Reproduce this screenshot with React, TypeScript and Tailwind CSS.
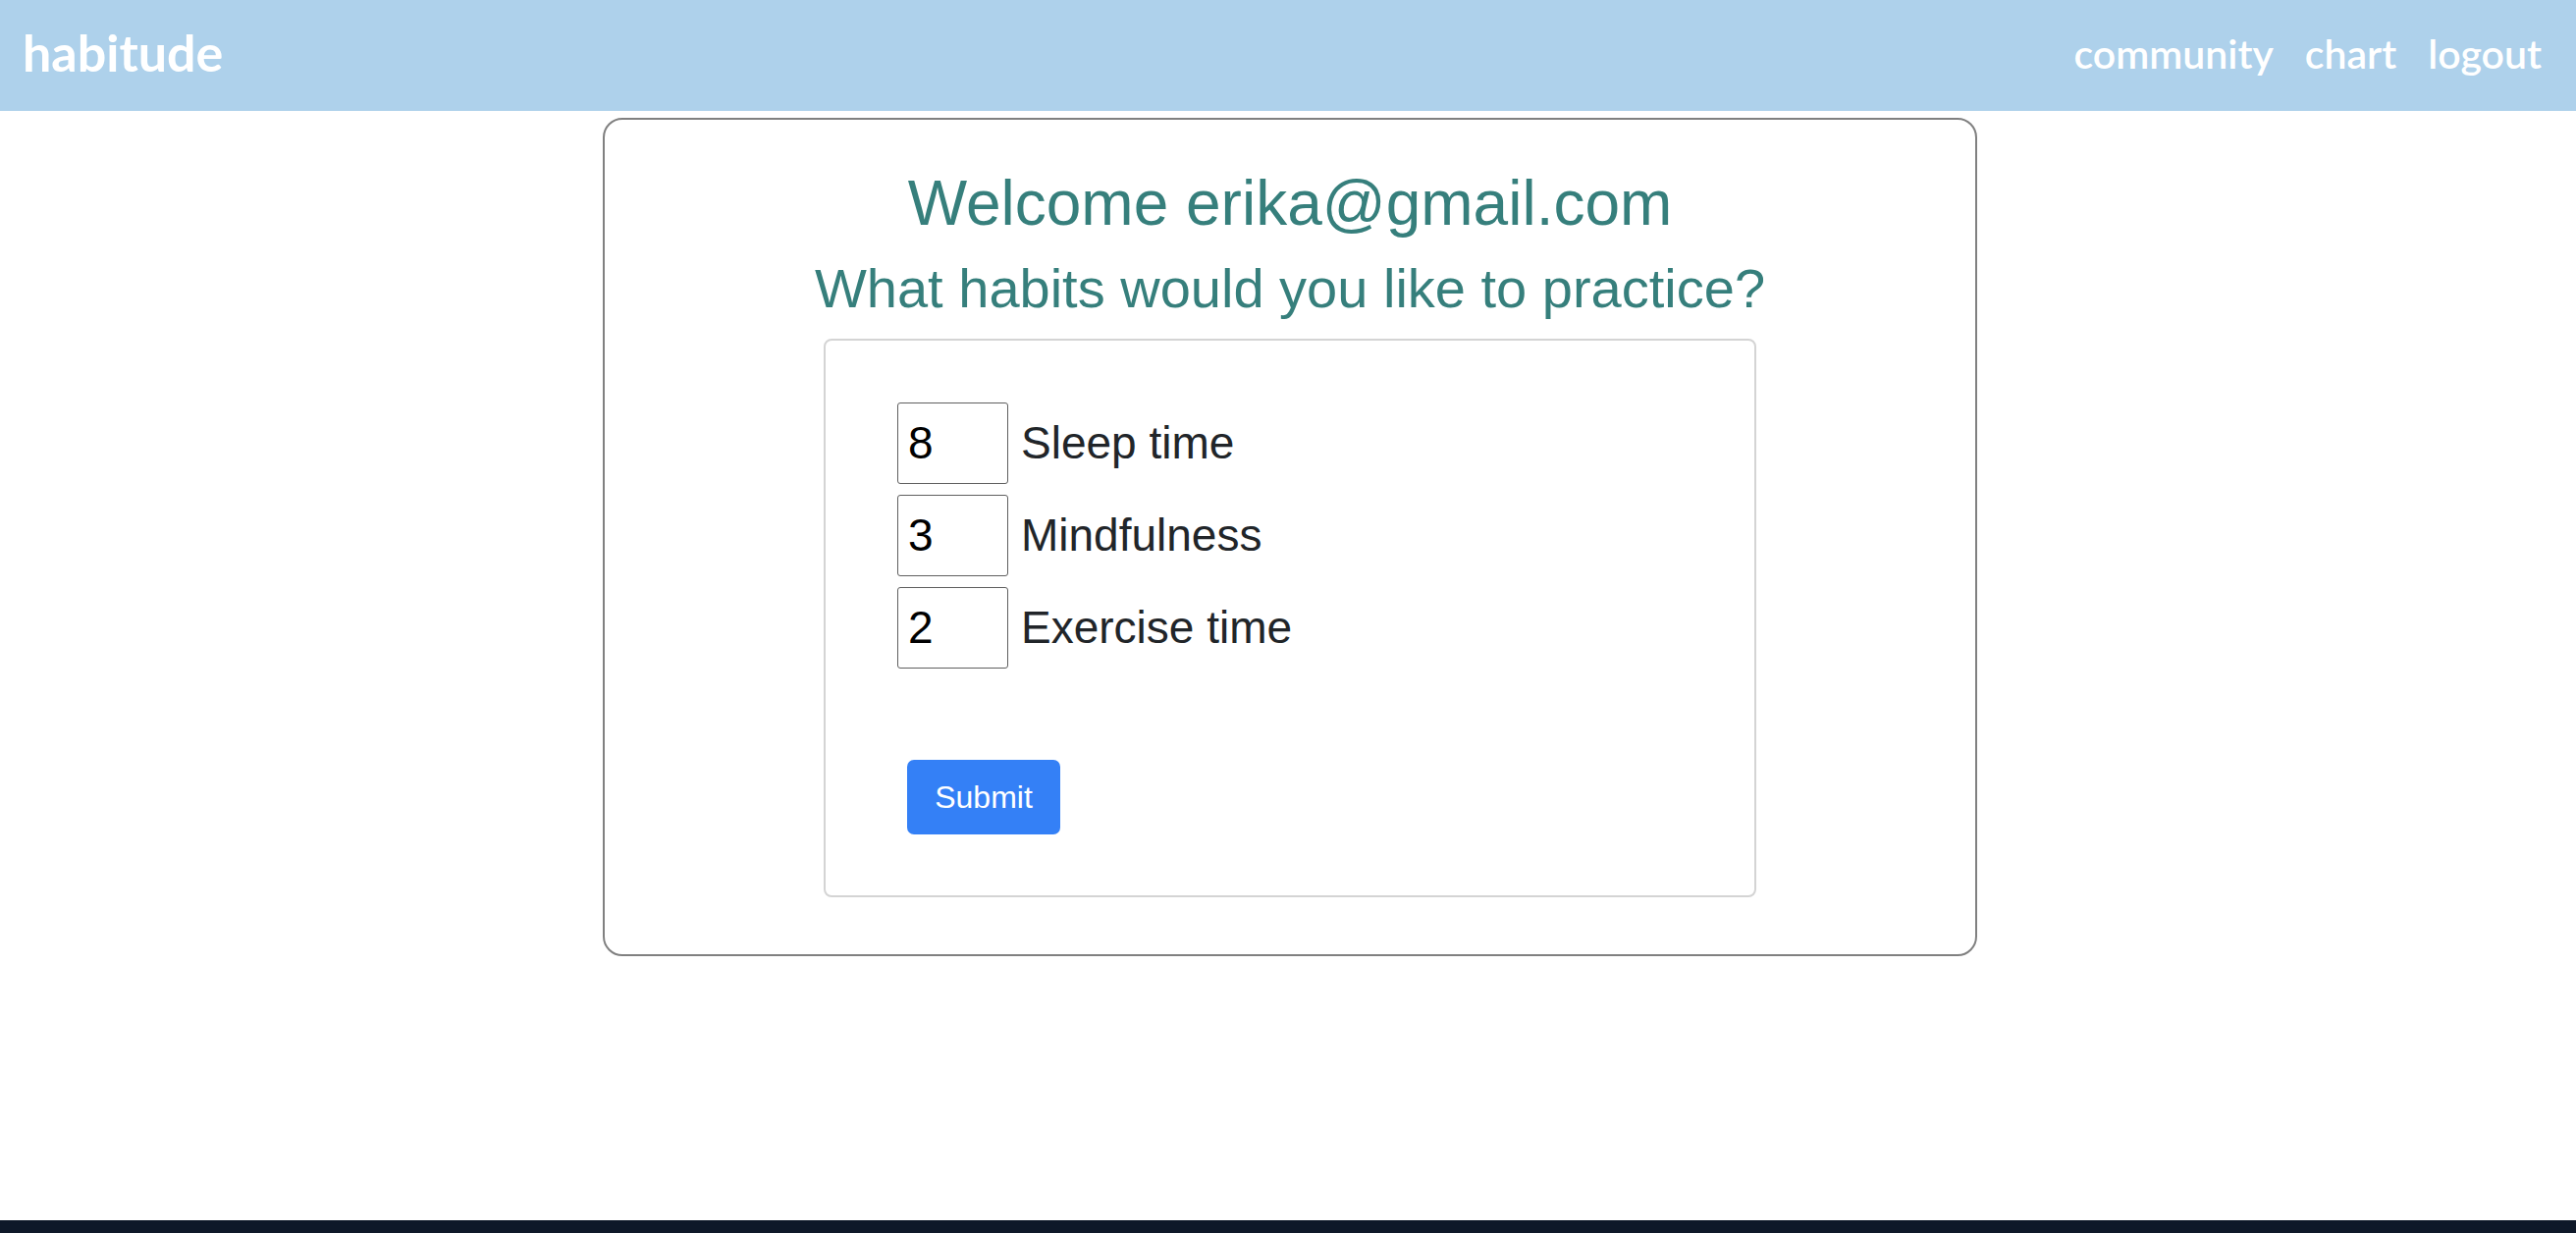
import React from "react";

const habits = [
  { value: "8", label: "Sleep time" },
  { value: "3", label: "Mindfulness" },
  { value: "2", label: "Exercise time" },
];

export default function App() {
  return (
    <div className="min-h-screen flex flex-col bg-white">
      <header className="h-[113px] bg-[#aed1eb] flex items-center justify-between pl-[23px] pr-[35px] shrink-0">
        <div className="text-white font-bold text-[52px] leading-none pb-[8px]" style={{ fontFamily: "Lato, 'Open Sans', sans-serif" }}>
          habitude
        </div>
        <nav className="flex items-center gap-[32px] text-white font-semibold text-[41px] leading-none pb-[4px]" style={{ fontFamily: "Lato, 'Open Sans', sans-serif" }}>
          <a>community</a>
          <a>chart</a>
          <a>logout</a>
        </nav>
      </header>

      <main className="flex-1 flex justify-center">
        <div className="mt-[7px] mb-auto ml-[4px] w-[1400px] h-[854px] border-2 border-[#808080] rounded-[20px] flex flex-col items-center pt-[47px]" style={{ fontFamily: "'Liberation Sans', Arial, sans-serif" }}>
          <h1 className="text-[64px] leading-[1.2] text-[#367f7c]">Welcome erika@gmail.com</h1>
          <h2 className="mt-[14px] text-[56px] leading-[1.2] text-[#367f7c]">What habits would you like to practice?</h2>
          <div className="mt-[18px] w-[950px] h-[569px] border-2 border-[#d4d4d4] rounded-[8px] pl-[73px] pt-[63px] flex flex-col">
            <div className="flex flex-col gap-[11px]">
              {habits.map((h) => (
                <div key={h.label} className="flex items-center">
                  <input
                    type="text"
                    defaultValue={h.value}
                    className="w-[113px] h-[83px] border border-[#5f5f5f] rounded-[3px] pl-[10px] text-[46px] text-black outline-none"
                    style={{ fontFamily: "'Liberation Sans', Arial, sans-serif" }}
                  />
                  <span className="ml-[13px] text-[46px] text-[#212529] leading-none">{h.label}</span>
                </div>
              ))}
            </div>
            <div className="mt-[93px] ml-[10px]">
              <button className="w-[156px] h-[76px] bg-[#3480f6] rounded-[7px] text-white text-[32px] flex items-center justify-center">
                Submit
              </button>
            </div>
          </div>
        </div>
      </main>

      <footer className="h-[13px] bg-[#0e1829] shrink-0" />
    </div>
  );
}
